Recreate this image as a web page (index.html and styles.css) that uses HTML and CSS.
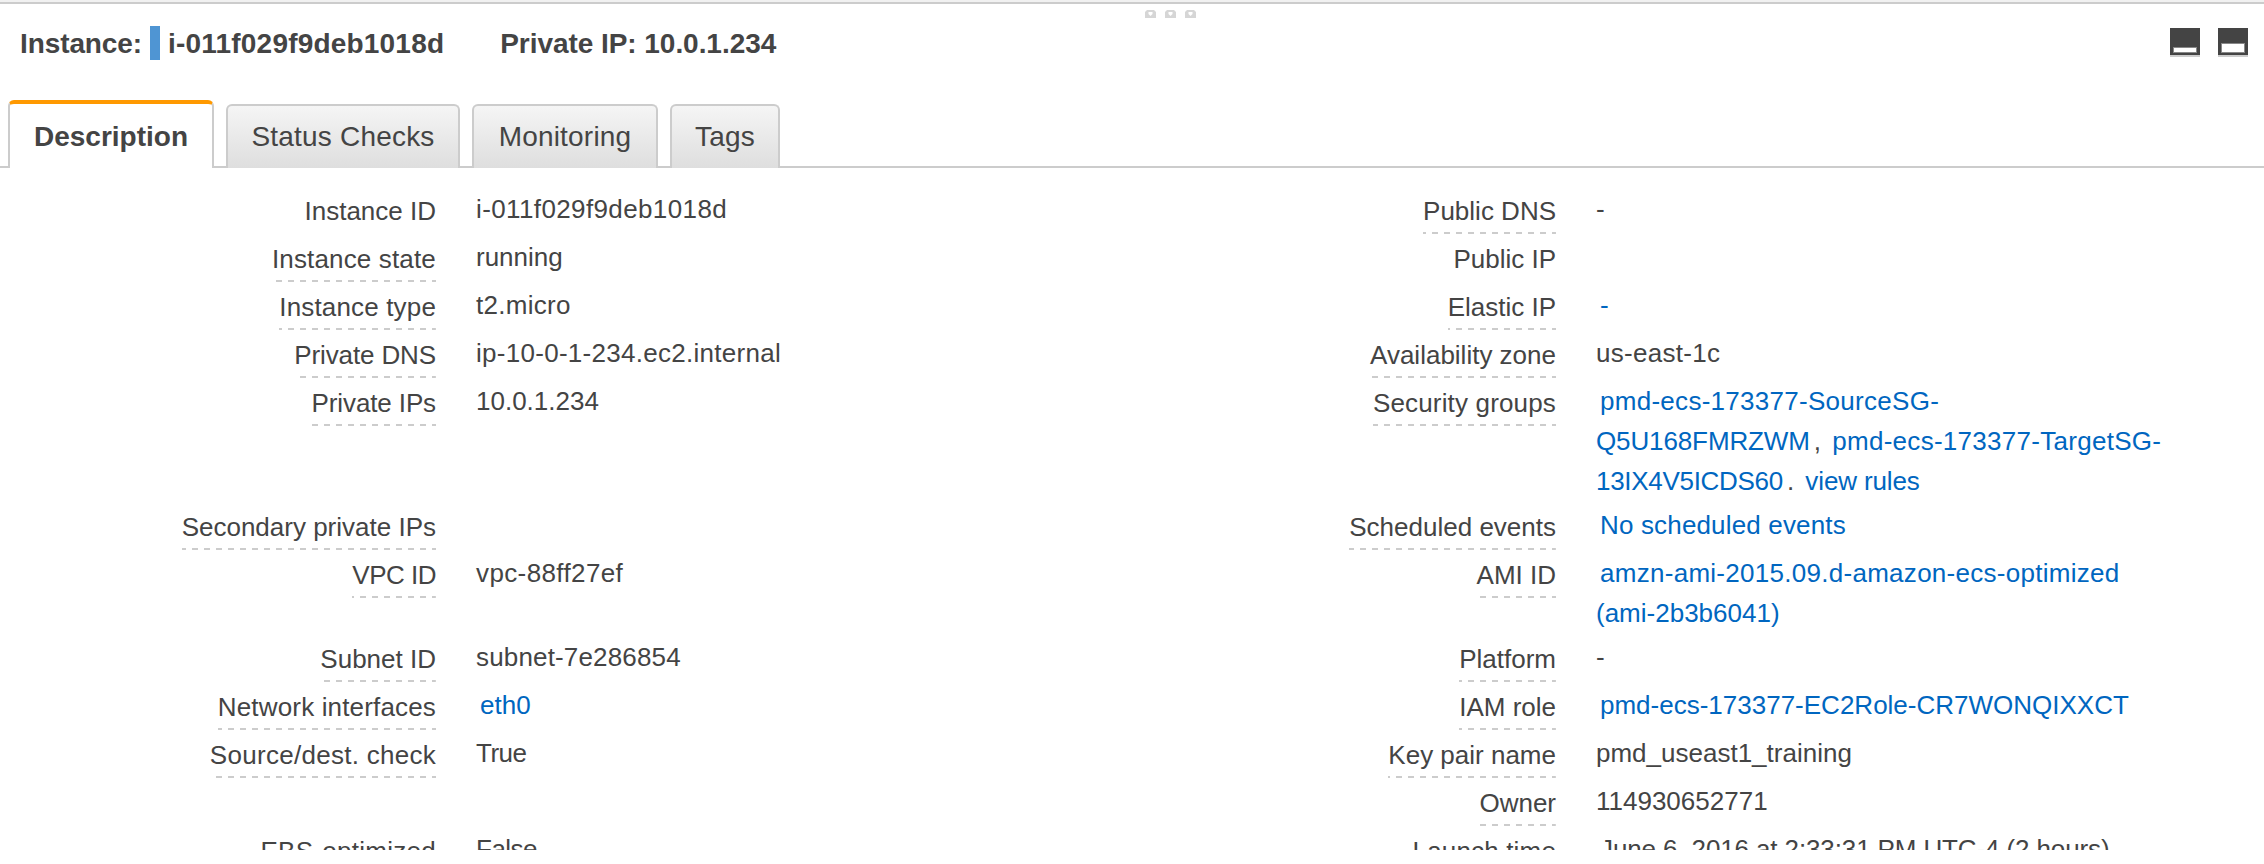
FILE: index.html
```html
<!DOCTYPE html>
<html lang="en">
<head>
<meta charset="utf-8">
<title>Instance details</title>
<link rel="stylesheet" href="styles.css">
</head>
<body>
<div class="splitter">
  <svg class="grip" viewBox="0 0 11 8"><path fill="#d6d6d6" d="M2 0h7l2 2v6H0V2z"/><path fill="#fff" d="M3.500 2h4v2l-2 2-2-2z"/></svg>
  <svg class="grip" viewBox="0 0 11 8"><path fill="#d6d6d6" d="M2 0h7l2 2v6H0V2z"/><path fill="#fff" d="M3.500 2h4v2l-2 2-2-2z"/></svg>
  <svg class="grip" viewBox="0 0 11 8"><path fill="#d6d6d6" d="M2 0h7l2 2v6H0V2z"/><path fill="#fff" d="M3.500 2h4v2l-2 2-2-2z"/></svg>
</div>
<header class="head">
  <span class="head-key">Instance:</span><span class="marker"></span><span class="head-id">i-011f029f9deb1018d</span>
  <span class="head-ip">Private IP: 10.0.1.234</span>
  <span class="win"><svg width="30" height="29" viewBox="0 0 30 29"><path fill="#444" d="M0 0h30v27H0z"/><path fill="#ccc" d="M0 27h30v2H0z"/><path fill="#888" d="M3 19h24v6H3z"/><path fill="#fff" d="M4 20h22v4H4z"/></svg>
  <svg width="30" height="29" viewBox="0 0 30 29"><path fill="#444" d="M0 0h30v27H0z"/><path fill="#ccc" d="M0 27h30v2H0z"/><path fill="#888" d="M3 15h24v10H3z"/><path fill="#fff" d="M4 16h22v8H4z"/></svg></span>
</header>
<nav class="tabs">
  <a class="tab active"><span>Description</span></a>
  <a class="tab t2"><span>Status Checks</span></a>
  <a class="tab t3"><span>Monitoring</span></a>
  <a class="tab t4"><span>Tags</span></a>
</nav>
<main class="details">
  <div class="row"><div class="k"><span class="plain">Instance ID</span></div><div class="v wide3">i-011f029f9deb1018d</div><div class="k"><span>Public DNS</span></div><div class="v">-</div></div>
  <div class="row"><div class="k"><span class="wide1">Instance state</span></div><div class="v">running</div><div class="k"><span class="plain">Public IP</span></div><div class="v"></div></div>
  <div class="row"><div class="k"><span class="wide1">Instance type</span></div><div class="v wide2">t2.micro</div><div class="k"><span>Elastic IP</span></div><div class="v"><a>-</a></div></div>
  <div class="row"><div class="k"><span class="tight1">Private DNS</span></div><div class="v wide2">ip-10-0-1-234.ec2.internal</div><div class="k"><span>Availability zone</span></div><div class="v wide2">us-east-1c</div></div>
  <div class="row"><div class="k"><span class="tight1">Private IPs</span></div><div class="v">10.0.1.234</div><div class="k"><span class="wide1">Security groups</span></div><div class="v"><a><span class="wide2">pmd-ecs-173377-SourceSG-</span><br><span class="tight1">Q5U168FMRZWM</span></a>, <a><span class="wide2">pmd-ecs-173377-TargetSG-</span><br><span class="tight2">13IX4V5ICDS60</span></a>. <a class="tight1">view rules</a></div></div>
  <div class="row"><div class="k"><span>Secondary private IPs</span></div><div class="v"></div><div class="k"><span>Scheduled events</span></div><div class="v"><a class="wide1">No scheduled events</a></div></div>
  <div class="row"><div class="k"><span class="tight3">VPC ID</span></div><div class="v wide3">vpc-88ff27ef</div><div class="k"><span>AMI ID</span></div><div class="v"><a><span class="wide2">amzn-ami-2015.09.d-amazon-ecs-optimized</span><br>(ami-2b3b6041)</a></div></div>
  <div class="row"><div class="k"><span>Subnet ID</span></div><div class="v wide1">subnet-7e286854</div><div class="k"><span>Platform</span></div><div class="v">-</div></div>
  <div class="row"><div class="k"><span class="wide1">Network interfaces</span></div><div class="v"><a>eth0</a></div><div class="k"><span>IAM role</span></div><div class="v"><a>pmd-ecs-173377-EC2Role-CR7WONQIXXCT</a></div></div>
  <div class="row"><div class="k"><span class="wide2">Source/dest. check</span></div><div class="v tight3">True</div><div class="k"><span>Key pair name</span></div><div class="v">pmd_useast1_training</div></div>
  <div class="row"><div class="k"></div><div class="v"></div><div class="k"><span>Owner</span></div><div class="v">114930652771</div></div>
  <div class="row"><div class="k"><span class="wide2">EBS-optimized</span></div><div class="v tight3">False</div><div class="k"><span class="wide1">Launch time</span></div><div class="v tight1"><span class="indent">June 6, 2016 at 2:33:31 PM UTC-4 (2 hours)</span></div></div>
</main>
</body>
</html>
```
FILE: styles.css
```css
* { box-sizing: border-box; }
body {
  margin: 0;
  height: 864px;
  overflow: hidden;
  background: #fff;
  color: #444;
  font: 26px/40px "Liberation Sans", Arial, sans-serif;
}
.splitter {
  height: 22px;
  border-top: 2px solid #f1f1f1;
  box-shadow: inset 0 2px #ccc;
  padding: 8px 0 0 1145px;
  display: flex;
  gap: 9px;
}
.grip { width: 11px; height: 8px; }
.head {
  height: 78px;
  padding: 0 16px 0 20px;
  display: flex;
  align-items: flex-start;
  font-size: 28px;
  font-weight: bold;
  line-height: 44px;
  letter-spacing: -0.1px;
  white-space: nowrap;
}
.head-id { letter-spacing: 0.2px; }
.marker { width: 10px; height: 34px; margin: 4px 8px 0 8px; background: #4f95d3; }
.head-ip { margin-left: 56px; letter-spacing: -0.05px; }
.win { margin-left: auto; padding-top: 6px; display: flex; gap: 18px; }
.tabs {
  height: 68px;
  padding-left: 8px;
  display: flex;
  align-items: flex-end;
  gap: 12px;
  box-shadow: inset 0 -2px #ccc;
  font-size: 28px;
}
.tab {
  height: 64px;
  width: 234px;
  border: 2px solid #ccc;
  border-bottom: 0;
  border-radius: 6px 6px 0 0;
  background: linear-gradient(#f5f5f5, #dedede);
  text-align: center;
  line-height: 62px;
  letter-spacing: 0.2px;
  white-space: nowrap;
}
.tab.active {
  width: 206px;
  height: 68px;
  border-top: 4px solid #f90;
  background: #fff;
  font-weight: bold;
  line-height: 66px;
  letter-spacing: 0;
}
.tab.t3 { width: 186px; }
.tab.t4 { width: 110px; }
.details { height: 682px; padding-top: 20px; overflow: hidden; }
.row {
  display: grid;
  grid-template-columns: 436px 684px 436px 1fr;
  min-height: 48px;
}
.k { text-align: right; white-space: nowrap; }
.k span {
  display: inline-block;
  height: 46px;
  line-height: 46px;
  background: repeating-linear-gradient(to left, #ccc 0 4px, transparent 4px 10px, #ccc 10px 12px) bottom / 100% 2px no-repeat;
}
.k .plain { background: none; }
.v { padding: 1px 0 3px 40px; white-space: nowrap; }
.v a { color: #0066c0; padding: 0 4px; }
.indent { padding-left: 4px; }
.wide1 { letter-spacing: 0.16px; }
.wide2 { letter-spacing: 0.28px; }
.wide3 { letter-spacing: 0.38px; }
.tight1 { letter-spacing: -0.12px; }
.tight2 { letter-spacing: -0.3px; }
.tight3 { letter-spacing: -0.5px; }
```
